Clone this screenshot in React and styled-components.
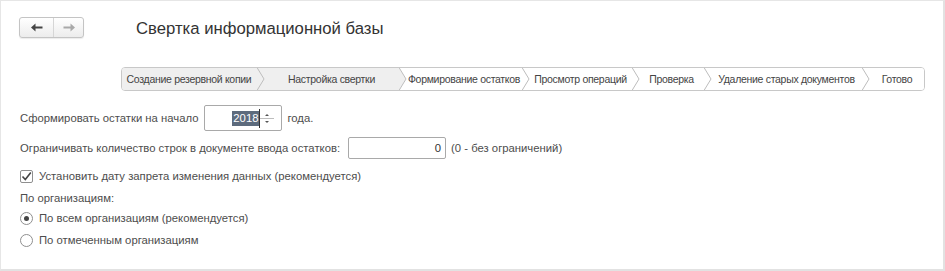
import styled, { createGlobalStyle } from "styled-components";

const GlobalStyle = createGlobalStyle`
  html, body {
    margin: 0;
    padding: 0;
    background: #fff;
  }
  * {
    box-sizing: border-box;
  }
`;

const Frame = styled.div`
  width: 945px;
  height: 271px;
  border-top: 1px solid #e6e6e6;
  border-left: 1px solid #e6e6e6;
  border-right: 2px solid #e2e2e2;
  border-bottom: 2px solid #e2e2e2;
  padding: 16px 0 0 18px;
  font-family: "Liberation Sans", Arial, sans-serif;
  font-size: 11.3px;
  color: #4d4d4d;
  overflow: hidden;
`;

const Header = styled.div`
  display: flex;
  align-items: center;
  height: 21px;
`;

const NavGroup = styled.div`
  display: flex;
  height: 21px;
  border: 1px solid #c4c4c4;
  border-radius: 3px;
  background: linear-gradient(#ffffff, #ececec);
  box-shadow: 0 1px 1px rgba(0, 0, 0, 0.08);
`;

const NavButton = styled.div`
  width: ${(p) => p.$w}px;
  display: flex;
  align-items: center;
  justify-content: center;
  & + & {
    border-left: 1px solid #d6d6d6;
  }
`;

const Title = styled.div`
  margin-left: 52px;
  margin-top: 3px;
  font-size: 16.7px;
  color: #333;
`;

const Steps = styled.div`
  display: flex;
  margin: 29px 0 0 102px;
  width: 804px;
  height: 24px;
  border: 1px solid #c8c8c8;
  border-radius: 4px;
  overflow: hidden;
  font-size: 10.5px;
  letter-spacing: -0.3px;
  color: #444;
`;

const Step = styled.div`
  display: flex;
  width: ${(p) => p.$w}px;
  background: ${(p) => (p.$done ? "#efefef" : "#fff")};
`;

const StepLabel = styled.div`
  flex: 1;
  display: flex;
  align-items: center;
  justify-content: center;
  white-space: nowrap;
`;

const Form = styled.div`
  display: flex;
  flex-direction: column;
  margin-top: 14px;
  padding-left: 1px;
`;

const Row = styled.div`
  display: flex;
  align-items: center;
  height: ${(p) => p.$h}px;
  margin-top: ${(p) => p.$top || 0}px;
  white-space: nowrap;
`;

const Field = styled.div`
  display: flex;
  align-items: center;
  justify-content: flex-end;
  width: ${(p) => p.$w}px;
  height: 100%;
  margin: 0 5px 0 ${(p) => p.$ml}px;
  border: 1px solid #a9a9a9;
  border-radius: 2px;
  padding-right: ${(p) => p.$pr}px;
  color: #333;
`;

const Selected = styled.span`
  background: #5d6b7d;
  color: #fff;
  padding: 0 1px;
  line-height: 15px;
`;

const Caret = styled.span`
  width: 1px;
  height: 19px;
  background: #333;
`;

const Spin = styled.div`
  display: flex;
  flex-direction: column;
  align-items: center;
  justify-content: space-around;
  width: 14px;
  height: 100%;
  padding: 5px 0;
  background-image: linear-gradient(#bdbdbd, #bdbdbd);
  background-size: 100% 1px;
  background-position: center;
  background-repeat: no-repeat;
`;

const SpinDot = styled.span`
  width: 0;
  height: 0;
  border-left: 2px solid transparent;
  border-right: 2px solid transparent;
  ${(p) => (p.$up ? "border-bottom: 2px solid #555;" : "border-top: 2px solid #555;")}
`;

const Box = styled.span`
  display: flex;
  align-items: center;
  justify-content: center;
  width: 13px;
  height: 13px;
  margin-right: 6px;
  border: 1px solid #8f8f8f;
  border-radius: ${(p) => (p.$round ? "50%" : "2px")};
  background: #fff;
`;

const Dot = styled.span`
  width: 5px;
  height: 5px;
  border-radius: 50%;
  background: #444;
`;

const ArrowIcon = ({ dir, color }) => (
  <svg width="12" height="9" viewBox="0 0 12 9">
    <g transform={dir === "right" ? "translate(12 0) scale(-1 1)" : undefined}>
      <path d="M0 4.5 L4.5 0.5 L4.5 8.5 Z" fill={color} />
      <rect x="4" y="3.5" width="7.5" height="2" fill={color} />
    </g>
  </svg>
);

const Chevron = ({ left, right }) => (
  <svg width="9" height="22" viewBox="0 0 9 22" style={{ flexShrink: 0 }}>
    <rect x="0" y="0" width="9" height="22" fill={right} />
    <path d="M0 0 L1 0 L8 11 L1 22 L0 22 Z" fill={left} />
    <path d="M1 -0.5 L8 11 L1 22.5" fill="none" stroke="#bdbdbd" strokeWidth="1" />
  </svg>
);

const steps = [
  { label: "Создание резервной копии", w: 134, done: true },
  { label: "Настройка свертки", w: 142, done: true },
  { label: "Формирование остатков", w: 123 },
  { label: "Просмотр операций", w: 110 },
  { label: "Проверка", w: 72 },
  { label: "Удаление старых документов", w: 158 },
  { label: "Готово", w: 63 },
];

const App = () => {
  return (
    <Frame>
      <GlobalStyle />
      <Header>
        <NavGroup>
          <NavButton $w={33}>
            <ArrowIcon dir="left" color="#444" />
          </NavButton>
          <NavButton $w={30}>
            <ArrowIcon dir="right" color="#a9a9a9" />
          </NavButton>
        </NavGroup>
        <Title>Свертка информационной базы</Title>
      </Header>

      <Steps>
        {steps.map((s, i) => (
          <Step key={s.label} $w={s.w} $done={s.done}>
            {i > 0 && (
              <Chevron
                left={steps[i - 1].done ? "#efefef" : "#fff"}
                right={s.done ? "#efefef" : "#fff"}
              />
            )}
            <StepLabel>{s.label}</StepLabel>
          </Step>
        ))}
      </Steps>

      <Form>
        <Row $h={26}>
          Сформировать остатки на начало
          <Field $w={78} $ml={6} $pr={7}>
            <Selected>2018</Selected>
            <Caret />
            <Spin>
              <SpinDot $up />
              <SpinDot />
            </Spin>
          </Field>
          года.
        </Row>
        <Row $h={22} $top={6}>
          Ограничивать количество строк в документе ввода остатков:
          <Field $w={98} $ml={8} $pr={4}>
            0
          </Field>
          (0 - без ограничений)
        </Row>
        <Row $h={16} $top={9}>
          <Box>
            <svg width="11" height="11" viewBox="0 0 11 11">
              <path d="M1.5 5.5 L4.3 8.5 L9.8 1.5" fill="none" stroke="#444" strokeWidth="1.6" />
            </svg>
          </Box>
          Установить дату запрета изменения данных (рекомендуется)
        </Row>
        <Row $h={16} $top={6}>
          По организациям:
        </Row>
        <Row $h={16} $top={4}>
          <Box $round>
            <Dot />
          </Box>
          По всем организациям (рекомендуется)
        </Row>
        <Row $h={16} $top={6}>
          <Box $round />
          По отмеченным организациям
        </Row>
      </Form>
    </Frame>
  );
};

export default App;
